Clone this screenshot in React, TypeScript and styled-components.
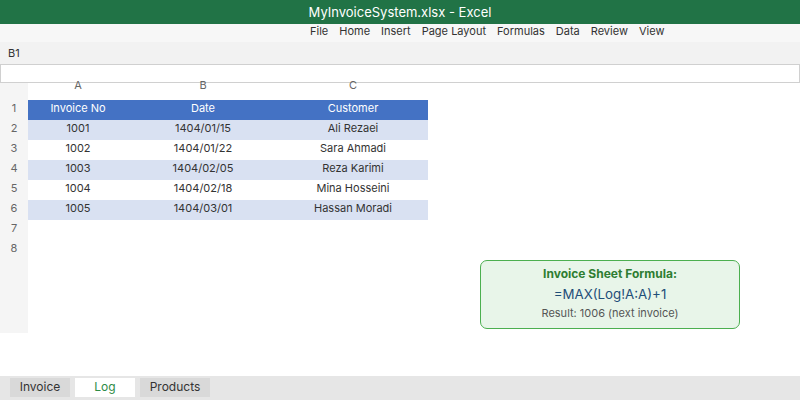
import React from 'react'
import styled, { createGlobalStyle } from 'styled-components'

const Global = createGlobalStyle`
    html, body {
        margin: 0;
        padding: 0;
        background: #fff;
    }
    body {
        font-family: Inter, "Noto Sans", "Liberation Sans", sans-serif;
        color: #333;
    }
`

const Window = styled.div`
    width: 800px;
    height: 400px;
    display: flex;
    flex-direction: column;
    overflow: hidden;
`

const TitleBar = styled.div`
    height: 24px;
    background: #217346;
    color: #fff;
    font-size: 13px;
    display: flex;
    align-items: center;
    justify-content: center;
`

const MenuBar = styled.div`
    height: 18px;
    background: #f7f7f7;
    display: flex;
    align-items: flex-start;
    padding-left: 304.5px;
    font-size: 11px;
    color: #333;
`

const MenuItem = styled.span`
    padding: 0 5.5px;
    line-height: 14px;
`

const NameBox = styled.div`
    height: 22px;
    background: #f2f2f2;
    display: flex;
    align-items: center;
    padding-left: 8px;
    font-size: 11px;
    color: #333;
`

const FormulaInput = styled.div`
    height: 17px;
    border: 1px solid #d0d0d0;
    background: #fff;
`

const Body = styled.div`
    height: 250px;
    display: flex;
`

const Grid = styled.div`
    display: grid;
    grid-template-columns: 28px 100px 150px 150px;
    grid-template-rows: 17px repeat(8, 20px) 1fr;
    font-size: 11px;
`

const RowHead = styled.div`
    background: #f5f5f5;
    color: #666;
    text-align: center;
    line-height: 16px;
`

const ColHead = styled.div`
    color: #666;
    text-align: center;
    line-height: 4px;
`

const Cell = styled.div<{ $kind: 'head' | 'even' | 'odd' | 'empty' }>`
    text-align: center;
    line-height: 16px;
    background: ${p =>
        p.$kind === 'head' ? '#4472c4' : p.$kind === 'even' ? '#d9e1f2' : '#fff'};
    color: ${p => (p.$kind === 'head' ? '#fff' : '#333')};
`

const Side = styled.div`
    flex: 1;
    display: flex;
    justify-content: flex-end;
    align-items: flex-end;
    padding: 0 60px 4px 0;
`

const FormulaCard = styled.div`
    width: 260px;
    height: 69px;
    box-sizing: border-box;
    background: #e8f5e9;
    border: 1px solid #4caf50;
    border-radius: 7px;
    display: flex;
    flex-direction: column;
    align-items: center;
    padding-top: 5px;
`

const CardTitle = styled.div`
    font-size: 12px;
    font-weight: 700;
    color: #2e7d32;
    line-height: 16px;
`

const CardFormula = styled.div`
    font-size: 13.3px;
    color: #1f4e79;
    line-height: 20px;
    margin-top: 2px;
`

const CardResult = styled.div`
    font-size: 11px;
    color: #555;
    line-height: 18px;
`

const Spacer = styled.div`
    flex: 1;
`

const TabBar = styled.div`
    height: 24px;
    background: #e6e6e6;
    display: flex;
    align-items: flex-start;
    gap: 5px;
    padding: 2px 0 0 10px;
    box-sizing: border-box;
`

const Tab = styled.div<{ $active?: boolean; $w: number }>`
    width: ${p => p.$w}px;
    height: 19px;
    text-align: center;
    line-height: 17px;
    font-size: 12px;
    background: ${p => (p.$active ? '#fff' : '#d9d9d9')};
    color: ${p => (p.$active ? '#2e8b47' : '#333')};
`

const menu = ['File', 'Home', 'Insert', 'Page Layout', 'Formulas', 'Data', 'Review', 'View']

const rows = [
    ['Invoice No', 'Date', 'Customer'],
    ['1001', '1404/01/15', 'Ali Rezaei'],
    ['1002', '1404/01/22', 'Sara Ahmadi'],
    ['1003', '1404/02/05', 'Reza Karimi'],
    ['1004', '1404/02/18', 'Mina Hosseini'],
    ['1005', '1404/03/01', 'Hassan Moradi'],
    ['', '', ''],
    ['', '', ''],
]

export default function App() {
    return (
        <Window>
            <Global />
            <TitleBar>MyInvoiceSystem.xlsx - Excel</TitleBar>
            <MenuBar>
                {menu.map(m => (
                    <MenuItem key={m}>{m}</MenuItem>
                ))}
            </MenuBar>
            <NameBox>B1</NameBox>
            <FormulaInput />
            <Body>
                <Grid>
                    <RowHead />
                    {['A', 'B', 'C'].map(c => (
                        <ColHead key={c}>{c}</ColHead>
                    ))}
                    {rows.map((r, i) => (
                        <React.Fragment key={i}>
                            <RowHead>{i + 1}</RowHead>
                            {r.map((v, j) => (
                                <Cell
                                    key={j}
                                    $kind={i === 0 ? 'head' : i > 5 ? 'empty' : i % 2 === 1 ? 'even' : 'odd'}
                                >
                                    {v}
                                </Cell>
                            ))}
                        </React.Fragment>
                    ))}
                    <RowHead />
                </Grid>
                <Side>
                    <FormulaCard>
                        <CardTitle>Invoice Sheet Formula:</CardTitle>
                        <CardFormula>=MAX(Log!A:A)+1</CardFormula>
                        <CardResult>Result: 1006 (next invoice)</CardResult>
                    </FormulaCard>
                </Side>
            </Body>
            <Spacer />
            <TabBar>
                <Tab $w={60}>Invoice</Tab>
                <Tab $w={60} $active>Log</Tab>
                <Tab $w={70}>Products</Tab>
            </TabBar>
        </Window>
    )
}
